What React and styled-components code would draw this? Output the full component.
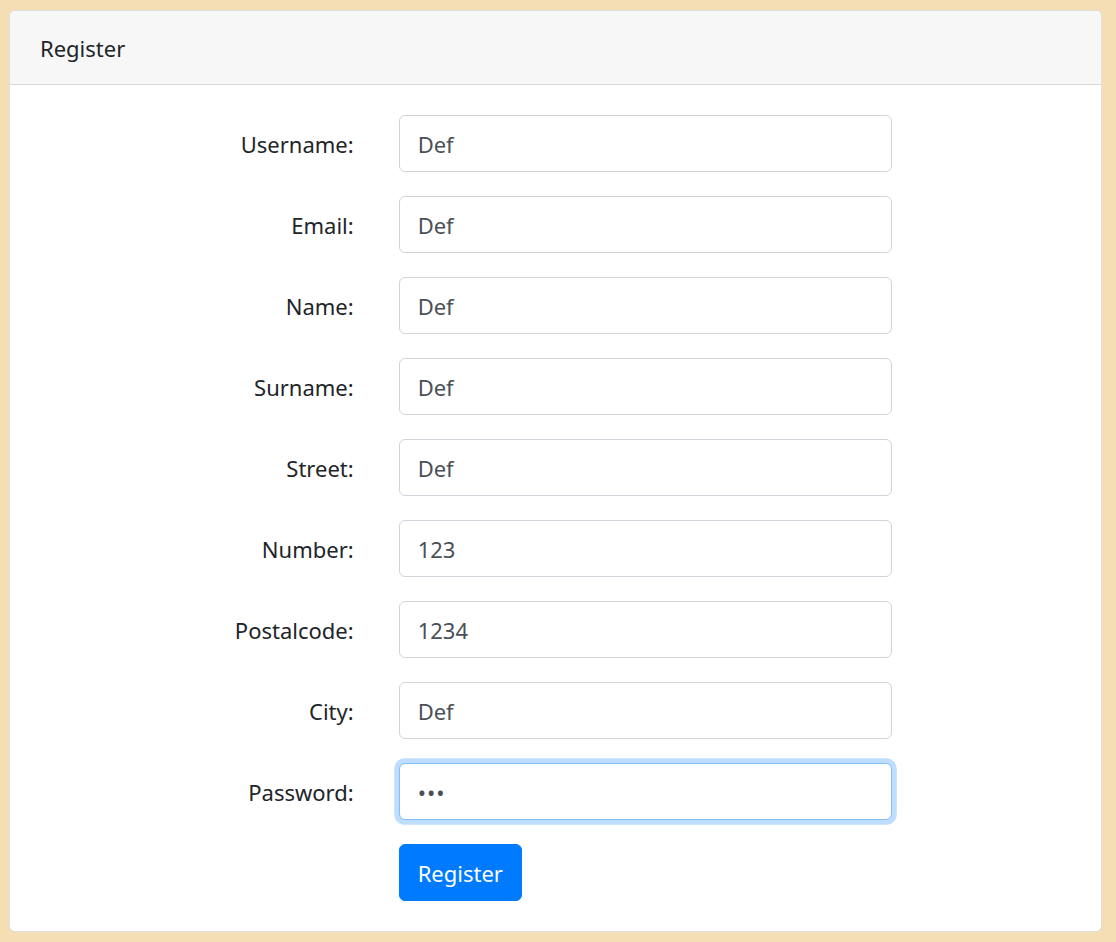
import { useState } from 'react';
import styled, { createGlobalStyle } from 'styled-components';

const GlobalStyle = createGlobalStyle`
    html, body {
        margin: 0;
        padding: 0;
        background: #f5deb3;
    }
    body {
        font-family: "Noto Sans", "Open Sans", sans-serif;
        color: #212529;
    }
`;

const Page = styled.div`
    padding: 10px 14px 10px 9px;
    min-height: 942px;
    box-sizing: border-box;
`;

const Card = styled.div`
    background: #fff;
    border: 1px solid rgba(0, 0, 0, 0.125);
    border-radius: 6px;
    overflow: hidden;
`;

const CardHeader = styled.div`
    background: #f7f7f7;
    border-bottom: 1px solid rgba(0, 0, 0, 0.125);
    padding: 19px 30px 18px;
    font-size: 22px;
    line-height: 36px;
`;

const CardBody = styled.form`
    padding: 30px;
`;

const Row = styled.div`
    display: flex;
    margin: 0 -22.5px ${(p) => (p.$last ? '0' : '24px')};
`;

const LabelCol = styled.label`
    box-sizing: border-box;
    flex: 0 0 33.3333%;
    padding: 0 22.5px;
    height: 57px;
    display: flex;
    align-items: center;
    justify-content: flex-end;
    font-size: 22px;
`;

const FieldCol = styled.div`
    box-sizing: border-box;
    flex: 0 0 50%;
    padding: 0 22.5px;
    margin-left: ${(p) => (p.$offset ? '33.3333%' : '0')};
`;

const Input = styled.input`
    box-sizing: border-box;
    display: block;
    width: 100%;
    height: 57px;
    padding: 9px 18px;
    font-family: inherit;
    font-size: 22px;
    color: #495057;
    background: #fff;
    border: 1px solid ${(p) => (p.$focused ? '#80bdff' : '#ced4da')};
    border-radius: 6px;
    outline: none;
    box-shadow: ${(p) => (p.$focused ? '0 0 0 4.8px rgba(0, 123, 255, 0.25)' : 'none')};
    caret-color: #212529;
    letter-spacing: ${(p) => (p.type === 'password' ? '1px' : 'normal')};
`;

const Button = styled.button`
    height: 57px;
    padding: 0 18px;
    font-family: inherit;
    font-size: 22px;
    color: #fff;
    background: #007bff;
    border: 1px solid #007bff;
    border-radius: 6px;
    cursor: pointer;
`;

const fields = [
    { name: 'username', label: 'Username:', value: 'Def' },
    { name: 'email', label: 'Email:', value: 'Def' },
    { name: 'name', label: 'Name:', value: 'Def' },
    { name: 'surname', label: 'Surname:', value: 'Def' },
    { name: 'street', label: 'Street:', value: 'Def' },
    { name: 'number', label: 'Number:', value: '123' },
    { name: 'postalcode', label: 'Postalcode:', value: '1234' },
    { name: 'city', label: 'City:', value: 'Def' },
];

const App = () => {
    const [values, setValues] = useState(
        Object.fromEntries(fields.map((f) => [f.name, f.value]))
    );
    const [password, setPassword] = useState('abc');

    const onChange = (e) => setValues({ ...values, [e.target.name]: e.target.value });

    return (
        <Page>
            <GlobalStyle />
            <Card>
                <CardHeader>Register</CardHeader>
                <CardBody onSubmit={(e) => e.preventDefault()}>
                    {fields.map((f) => (
                        <Row key={f.name}>
                            <LabelCol htmlFor={f.name}>{f.label}</LabelCol>
                            <FieldCol>
                                <Input id={f.name} name={f.name} value={values[f.name]} onChange={onChange} />
                            </FieldCol>
                        </Row>
                    ))}
                    <Row>
                        <LabelCol htmlFor='password'>Password:</LabelCol>
                        <FieldCol>
                            <Input
                                id='password'
                                type='password'
                                $focused
                                autoFocus
                                value={password}
                                onChange={(e) => setPassword(e.target.value)}
                            />
                        </FieldCol>
                    </Row>
                    <Row $last>
                        <FieldCol $offset>
                            <Button type='submit'>Register</Button>
                        </FieldCol>
                    </Row>
                </CardBody>
            </Card>
        </Page>
    );
};

export default App;
